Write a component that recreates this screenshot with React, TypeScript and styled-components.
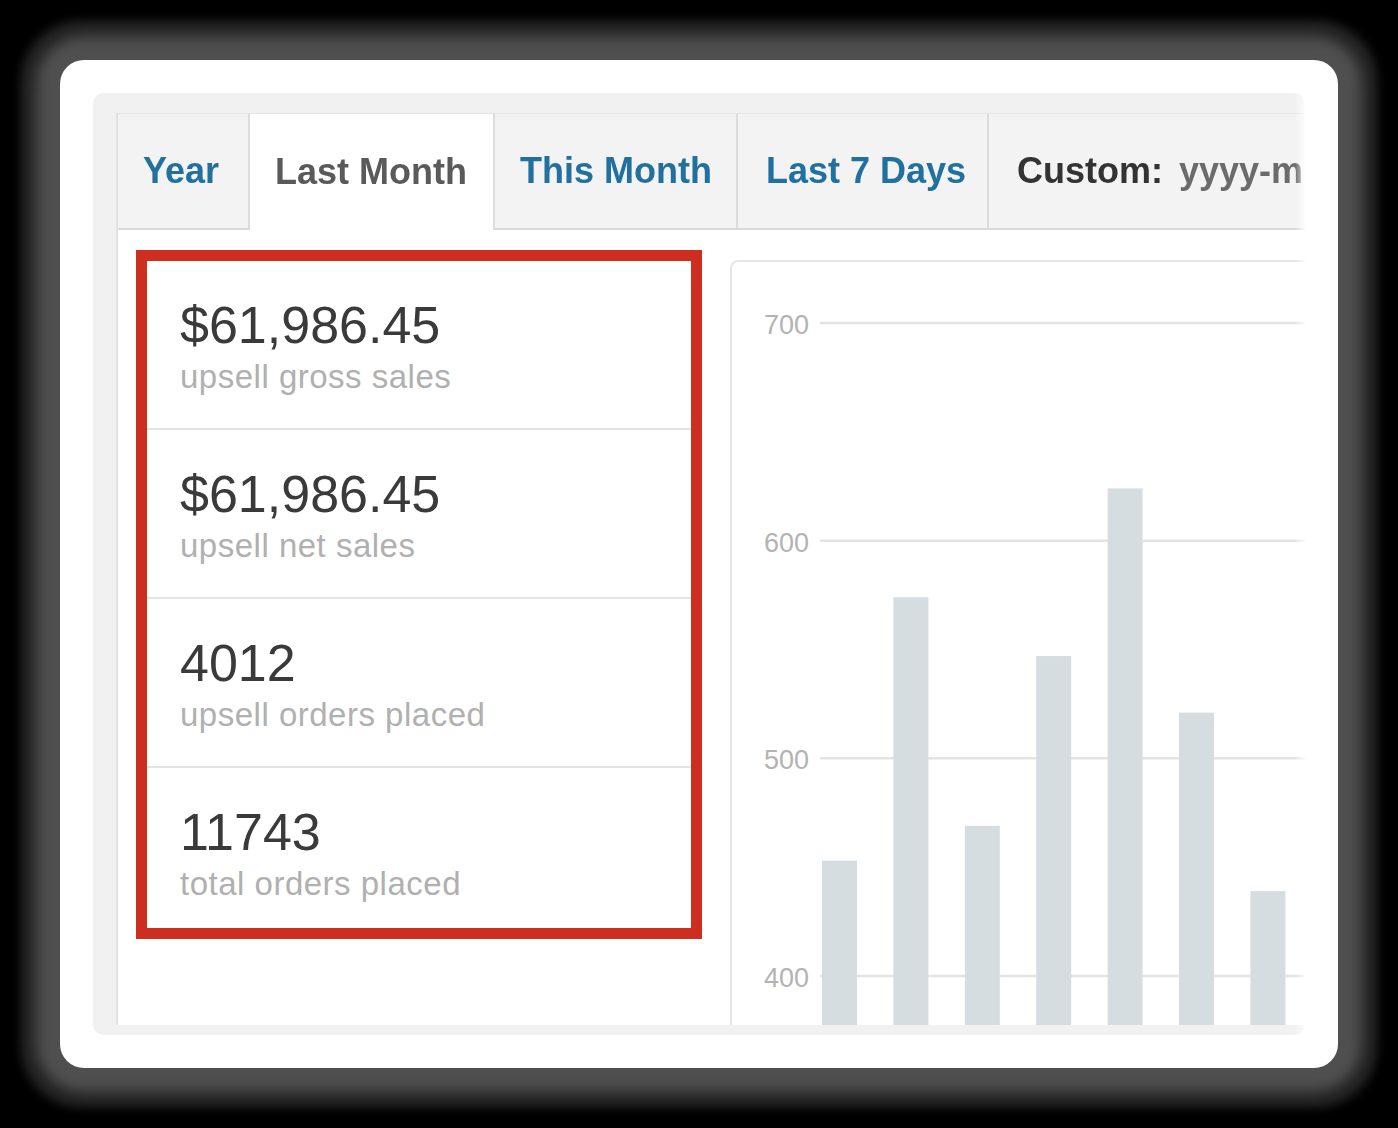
import React from 'react';
import styled, { createGlobalStyle } from 'styled-components';

const GlobalStyle = createGlobalStyle`
  html, body {
    margin: 0;
    padding: 0;
    background: #000;
  }
  body {
    width: 1398px;
    height: 1128px;
    overflow: hidden;
    font-family: "Liberation Sans", Arial, sans-serif;
  }
  * { box-sizing: border-box; }
`;

const Stage = styled.div`
  width: 1398px;
  height: 1128px;
  padding: 60px;
  background: #000;
`;

const Card = styled.div`
  width: 1278px;
  height: 1008px;
  background: #fff;
  border-radius: 24px;
  padding: 33px;
  box-shadow: 0 0 14px 24px rgba(100, 100, 100, 0.7), 0 0 8px 40px rgba(55, 55, 55, 0.6);
`;

const Frame = styled.div`
  width: 100%;
  height: 100%;
  background: #f1f1f1;
  border-radius: 10px;
  padding: 20px 0 10px 23px;
  overflow: hidden;
  display: flex;
  box-shadow: 0 0 5px rgba(0, 0, 0, 0.05);
  -webkit-mask-image: linear-gradient(to right, #000 calc(100% - 10px), rgba(0, 0, 0, 0.2));
  mask-image: linear-gradient(to right, #000 calc(100% - 10px), rgba(0, 0, 0, 0.2));
`;

const Panel = styled.div`
  flex: 1;
  min-width: 0;
  background: #fff;
  border-left: 2px solid #e2e2e2;
  display: flex;
  flex-direction: column;
  overflow: hidden;
`;

const TabBar = styled.div`
  display: flex;
  flex-shrink: 0;
  height: 117px;
  border-top: 1px solid #e3e3e3;
  border-bottom: 2px solid #dadada;
  background: #f1f1f1;
`;

const Tab = styled.div<{ $active?: boolean; $link?: boolean; $w?: number; $pl?: number }>`
  flex-shrink: 0;
  display: flex;
  align-items: center;
  width: ${(p) => (p.$w ? `${p.$w}px` : 'auto')};
  padding: 0 0 0 ${(p) => p.$pl ?? 25}px;
  height: ${(p) => (p.$active ? '116px' : '114px')};
  margin-bottom: ${(p) => (p.$active ? '-2px' : '0')};
  background: ${(p) => (p.$active ? '#fff' : '#f3f3f3')};
  border-right: 2px solid #dcdcdc;
  font-size: 36px;
  font-weight: 700;
  white-space: nowrap;
  color: ${(p) => (p.$link ? '#21709e' : '#5a5a5a')};
`;

const CustomTab = styled(Tab)`
  border-right: none;
  color: #333;
`;

const Placeholder = styled.span`
  margin-left: 16px;
  color: #6b6b6b;
`;

const Body = styled.div`
  flex: 1;
  min-height: 0;
  display: flex;
  align-items: flex-start;
  gap: 28px;
  padding: 20px 0 0 18px;
  overflow: hidden;
`;

const StatsBox = styled.div`
  flex-shrink: 0;
  width: 566px;
  border: 11px solid #cd2e1f;
  background: #fff;
  display: flex;
  flex-direction: column;
`;

const StatRow = styled.div`
  height: 169px;
  padding: 38px 32px 0 33px;
  border-bottom: 2px solid #e3e3e3;
  &:last-child {
    height: 160px;
    border-bottom: none;
  }
`;

const Value = styled.div`
  font-size: 52px;
  line-height: 52px;
  color: #3a3a3a;
`;

const Label = styled.div`
  margin-top: 9px;
  font-size: 33px;
  line-height: 33px;
  letter-spacing: 0.5px;
  color: #b0b0b0;
`;

const ChartPanel = styled.div`
  flex: 1;
  min-width: 0;
  margin-top: 10px;
  height: 820px;
  border: 2px solid #e6e6e6;
  border-right: none;
  border-radius: 8px 0 0 0;
  background: #fff;
  overflow: hidden;
`;

const ChartSvg = styled.svg`
  display: block;
  font-family: "Liberation Sans", Arial, sans-serif;
`;

const stats = [
  { value: '$61,986.45', label: 'upsell gross sales' },
  { value: '$61,986.45', label: 'upsell net sales' },
  { value: '4012', label: 'upsell orders placed' },
  { value: '11743', label: 'total orders placed' },
];

const ticks = [700, 600, 500, 400];
const bars = [453, 574, 469, 547, 624, 521, 439];

const yFor = (v: number) => 61 + ((700 - v) * 653) / 300;

export default function App() {
  return (
    <>
      <GlobalStyle />
      <Stage>
        <Card>
          <Frame>
            <Panel>
              <TabBar>
                <Tab $link $w={132}>Year</Tab>
                <Tab $active $w={245}>Last Month</Tab>
                <Tab $link $w={243}>This Month</Tab>
                <Tab $link $w={251} $pl={28}>Last 7 Days</Tab>
                <CustomTab $pl={28}>
                  Custom:<Placeholder>yyyy-mm-dd</Placeholder>
                </CustomTab>
              </TabBar>
              <Body>
                <StatsBox>
                  {stats.map((s, i) => (
                    <StatRow key={i}>
                      <Value>{s.value}</Value>
                      <Label>{s.label}</Label>
                    </StatRow>
                  ))}
                </StatsBox>
                <ChartPanel>
                  <ChartSvg width={600} height={820}>
                    {ticks.map((t) => (
                      <g key={t}>
                        <line x1={88} x2={600} y1={yFor(t)} y2={yFor(t)} stroke="#e4e4e4" strokeWidth={2.5} />
                        <text x={77} y={yFor(t) + 11} textAnchor="end" fontSize={27} fill="#b3b3b3">
                          {t}
                        </text>
                      </g>
                    ))}
                    {bars.map((b, i) => (
                      <rect key={i} x={90 + i * 71.4} y={yFor(b)} width={35} height={820 - yFor(b)} fill="#d6dde0" />
                    ))}
                  </ChartSvg>
                </ChartPanel>
              </Body>
            </Panel>
          </Frame>
        </Card>
      </Stage>
    </>
  );
}
